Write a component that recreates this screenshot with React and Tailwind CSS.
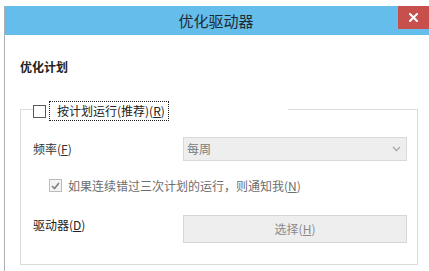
const Key = ({ k }) => <span className="underline">{k}</span>;

const App = () => {
    return (
        <div className="w-[429px] h-[271px] bg-white overflow-hidden pt-[6px] pl-[4px] font-['Noto_Sans_CJK_SC',sans-serif]">
            <div className="h-full border-l border-[#aab0b6] flex flex-col">
                {/* title bar */}
                <div className="relative h-[29px] bg-[#64bdea] flex items-center justify-center shrink-0">
                    <span className="text-[15px] leading-none text-[#1f2a33] pr-[2px]">优化驱动器</span>
                    <div className="absolute right-0 top-0 w-[31px] h-[23px] bg-[#c8504c] flex items-center justify-center">
                        <svg width="9" height="9" viewBox="0 0 9 9">
                            <path d="M1 1 L8 8 M8 1 L1 8" stroke="#fff" strokeWidth="2" strokeLinecap="square" />
                        </svg>
                    </div>
                </div>

                <div className="pl-[15px]">
                    <div className="mt-[25px] h-[14px] flex items-center text-[12px] font-bold text-[#222]">优化计划</div>

                    <fieldset className="mt-[23px] w-[398px] h-[168px] border border-[#dcdcdc] px-0 pb-[20px] pt-0">
                        <legend className="ml-[12px] w-[255px] h-[24px] pt-[4px] flex items-center">
                            <span className="w-[13px] h-[13px] border border-[#5a5a5a] bg-white shrink-0" />
                            <span className="ml-[3px] h-[20px] pl-[7px] pr-[3px] border border-dotted border-[#222] flex items-center text-[12px] text-[#222]">
                                按计划运行(推荐)(<Key k="R" />)
                            </span>
                        </legend>

                        <div className="pl-[12px] pr-[10px] mt-[16px] flex items-center h-[24px]">
                            <span className="w-[150px] text-[12px] text-[#333]">频率(<Key k="F" />)</span>
                            <div className="flex-1 h-[24px] bg-[#eeeeee] border border-[#d9d9d9] flex items-center justify-between pl-[3px] pr-[5px]">
                                <span className="text-[12px] text-[#7a7a7a]">每周</span>
                                <svg width="9" height="6" viewBox="0 0 9 6">
                                    <path d="M1 1 L4.5 4.5 L8 1" stroke="#a8a8a8" strokeWidth="1.3" fill="none" />
                                </svg>
                            </div>
                        </div>

                        <div className="pl-[28px] mt-[17px] flex items-center h-[15px]">
                            <span className="w-[13px] h-[13px] border border-[#bcbcbc] bg-[#f4f4f4] flex items-center justify-center">
                                <svg width="9" height="8" viewBox="0 0 9 8">
                                    <path d="M1 4 L3.5 6.5 L8 1" stroke="#7f7f7f" strokeWidth="1.6" fill="none" />
                                </svg>
                            </span>
                            <span className="ml-[6px] text-[12px] text-[#6d6d6d]">
                                如果连续错过三次计划的运行，则通知我(<Key k="N" />)
                            </span>
                        </div>

                        <div className="pl-[12px] pr-[10px] mt-[22px] flex items-start">
                            <span className="w-[150px] mt-[1px] text-[12px] text-[#222]">驱动器(<Key k="D" />)</span>
                            <div className="flex-1 h-[28px] bg-[#eeeeee] border border-[#d6d6d6] flex items-center justify-center">
                                <span className="text-[12px] text-[#8a8a8a]">选择(<Key k="H" />)</span>
                            </div>
                        </div>
                    </fieldset>
                </div>
            </div>
        </div>
    );
};

export default App;
